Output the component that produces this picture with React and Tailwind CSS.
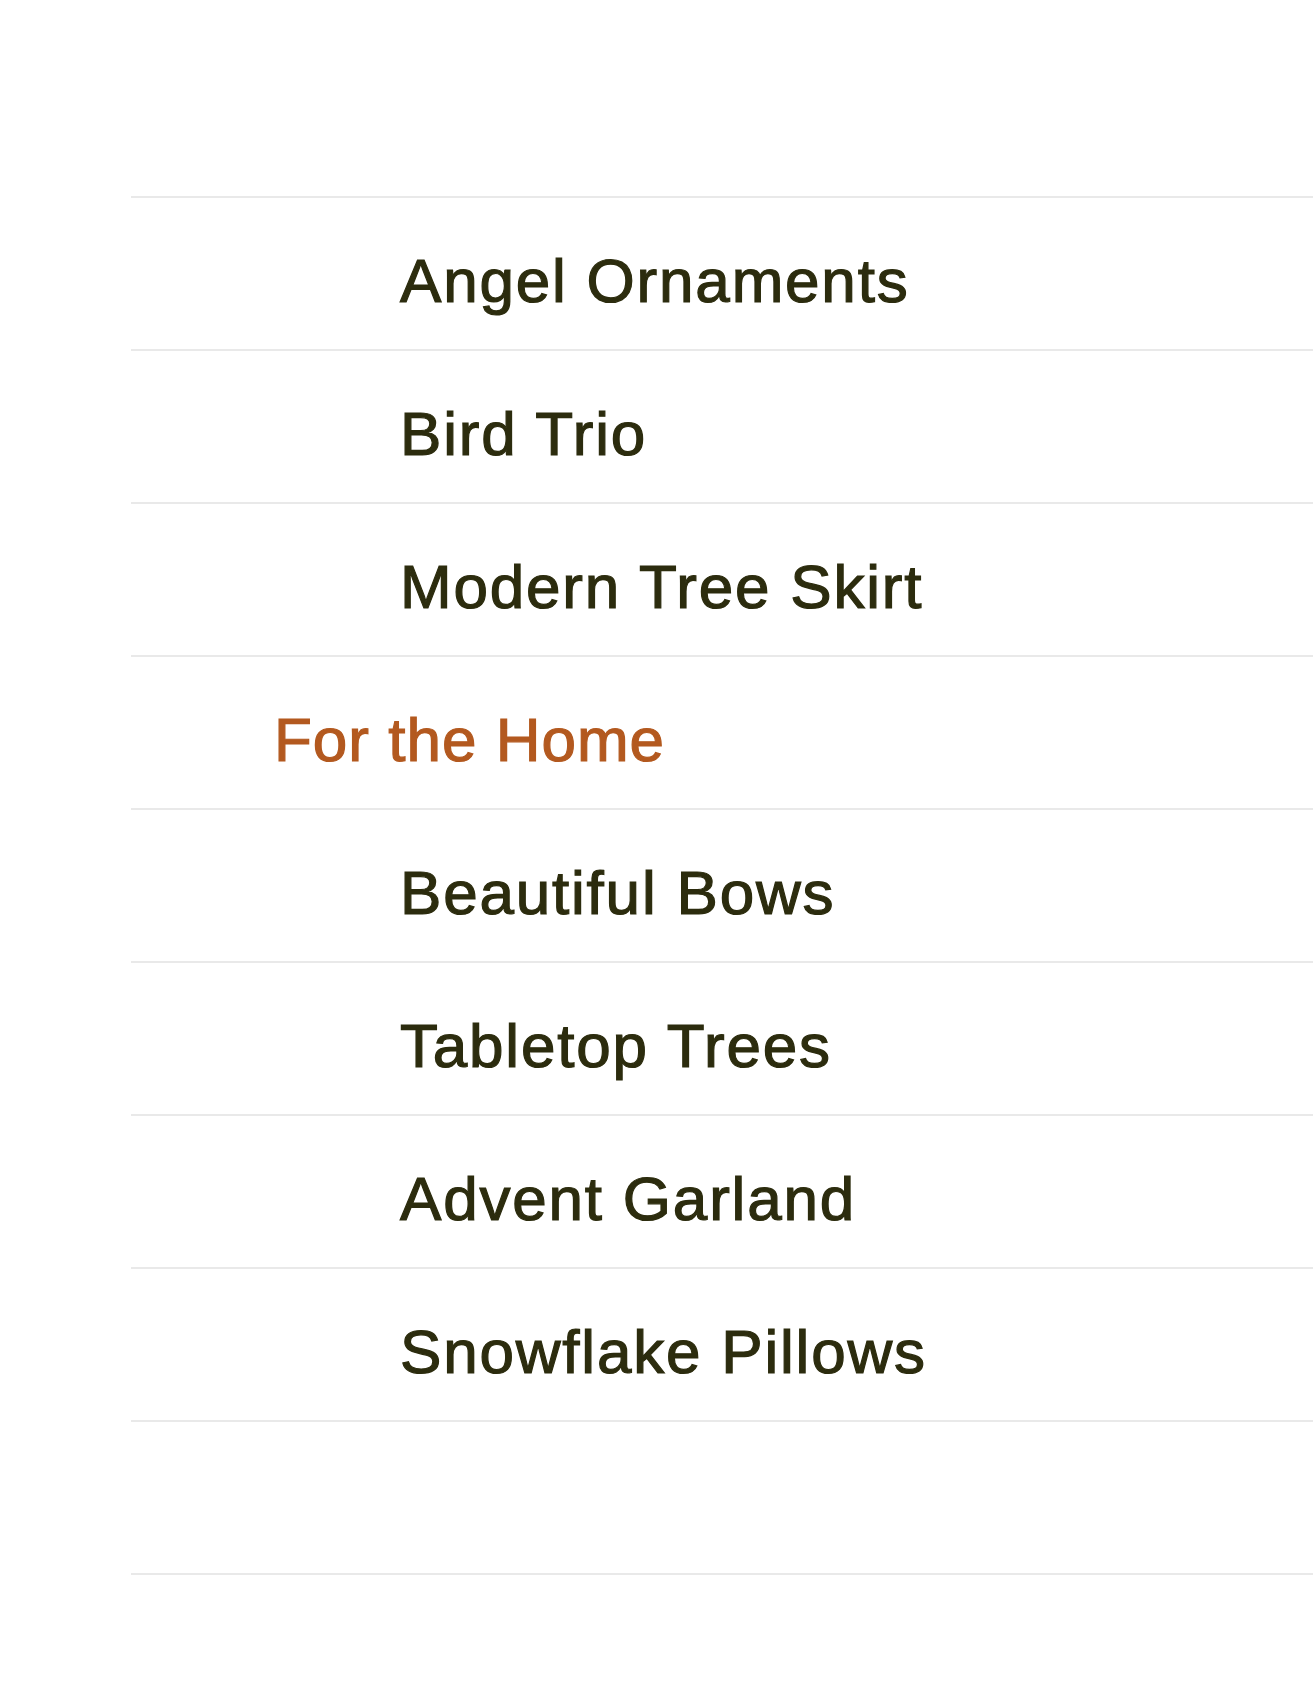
import React from "react";

const rows = [
  { label: "Angel Ornaments", type: "item" },
  { label: "Bird Trio", type: "item" },
  { label: "Modern Tree Skirt", type: "item" },
  { label: "For the Home", type: "heading" },
  { label: "Beautiful Bows", type: "item" },
  { label: "Tabletop Trees", type: "item" },
  { label: "Advent Garland", type: "item" },
  { label: "Snowflake Pillows", type: "item" },
  { label: "", type: "empty" },
];

export default function App() {
  return (
    <div
      className="min-h-[1698px] bg-white pt-[196px] pl-[131px]"
      style={{ fontFamily: '"Liberation Sans", Arial, sans-serif' }}
    >
      <ul className="border-b-2 border-[#e9e9e9]">
        {rows.map((r, i) => (
          <li
            key={i}
            className="h-[153px] border-t-2 border-[#e9e9e9] pt-[47px]"
          >
            {r.label && (
              <span
                className={
                  r.type === "heading"
                    ? "block pl-[143px] text-[62px] leading-[71px] tracking-[1px] text-[#b3591f] [-webkit-text-stroke-width:1.2px]"
                    : "block pl-[269px] text-[62px] leading-[71px] tracking-[1.8px] text-[#2c2c0e] [-webkit-text-stroke-width:1.2px]"
                }
              >
                {r.label}
              </span>
            )}
          </li>
        ))}
      </ul>
    </div>
  );
}
